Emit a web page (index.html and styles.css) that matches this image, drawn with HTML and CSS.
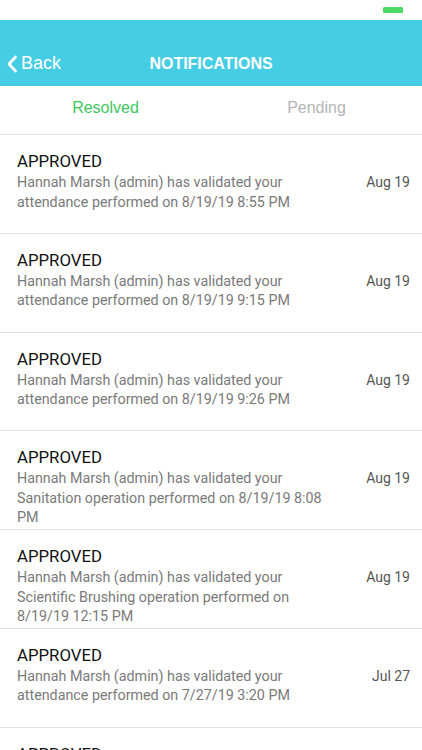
FILE: index.html
```html
<!DOCTYPE html>
<html lang="en">
<head>
    <meta charset="UTF-8">
    <meta name="viewport" content="width=device-width, initial-scale=1.0">
    <title>Notifications</title>
    <link rel="stylesheet" href="styles.css">
</head>
<body>
    <div class="status-bar">
        <span class="battery"></span>
    </div>

    <div class="header">
        <a class="back" href="#">
            <svg width="12" height="18" viewBox="0 0 12 18"><path d="M9.5 2 L3 9 L9.5 16" fill="none" stroke="#fff" stroke-width="2.8" stroke-linecap="round" stroke-linejoin="round"/></svg>
            <span>Back</span>
        </a>
        <h1>NOTIFICATIONS</h1>
    </div>

    <div class="tabs">
        <div class="tab active">Resolved</div>
        <div class="tab">Pending</div>
    </div>

    <ul class="list">
        <li class="item">
            <div class="item-text">
                <div class="item-title">APPROVED</div>
                <div class="item-body">Hannah Marsh (admin) has validated your attendance performed on 8/19/19 8:55 PM</div>
            </div>
            <div class="item-date">Aug 19</div>
        </li>
        <li class="item">
            <div class="item-text">
                <div class="item-title">APPROVED</div>
                <div class="item-body">Hannah Marsh (admin) has validated your attendance performed on 8/19/19 9:15 PM</div>
            </div>
            <div class="item-date">Aug 19</div>
        </li>
        <li class="item">
            <div class="item-text">
                <div class="item-title">APPROVED</div>
                <div class="item-body">Hannah Marsh (admin) has validated your attendance performed on 8/19/19 9:26 PM</div>
            </div>
            <div class="item-date">Aug 19</div>
        </li>
        <li class="item">
            <div class="item-text">
                <div class="item-title">APPROVED</div>
                <div class="item-body">Hannah Marsh (admin) has validated your Sanitation operation performed on 8/19/19 8:08 PM</div>
            </div>
            <div class="item-date">Aug 19</div>
        </li>
        <li class="item">
            <div class="item-text">
                <div class="item-title">APPROVED</div>
                <div class="item-body">Hannah Marsh (admin) has validated your Scientific Brushing operation performed on 8/19/19 12:15 PM</div>
            </div>
            <div class="item-date">Aug 19</div>
        </li>
        <li class="item">
            <div class="item-text">
                <div class="item-title">APPROVED</div>
                <div class="item-body">Hannah Marsh (admin) has validated your attendance performed on 7/27/19 3:20 PM</div>
            </div>
            <div class="item-date">Jul 27</div>
        </li>
        <li class="item">
            <div class="item-text">
                <div class="item-title">APPROVED</div>
                <div class="item-body">Hannah Marsh (admin) has validated your attendance performed on 7/27/19 3:10 PM</div>
            </div>
            <div class="item-date">Jul 27</div>
        </li>
    </ul>
</body>
</html>
```

FILE: styles.css
```css
body {
    margin: 0;
    padding: 0;
    background-color: #fff;
    font-family: Roboto, "Liberation Sans", sans-serif;
    height: 750px;
    overflow: hidden;
}

.status-bar {
    height: 20px;
    display: flex;
    justify-content: flex-end;
    align-items: center;
    padding-right: 19px;
}

.battery {
    width: 20px;
    height: 6px;
    border-radius: 1.5px;
    background-color: #4cd964;
}

.header {
    height: 66px;
    background-color: #45cde4;
    display: flex;
    align-items: center;
    justify-content: center;
    position: relative;
}

.back {
    position: absolute;
    left: 6px;
    top: 33px;
    display: flex;
    align-items: center;
    gap: 3px;
    color: #fff;
    text-decoration: none;
    font-family: "Liberation Sans", Arial, sans-serif;
    font-size: 18px;
}

.back svg {
    margin-top: 1px;
}

.header h1 {
    margin: 22px 0 0;
    color: #fff;
    font-family: "Liberation Sans", Arial, sans-serif;
    font-size: 16px;
    font-weight: bold;
}

.tabs {
    height: 44px;
    padding-bottom: 4px;
    display: flex;
    border-bottom: 1px solid #e3e3e3;
}

.tab {
    flex: 1;
    display: flex;
    align-items: center;
    justify-content: center;
    font-family: "Liberation Sans", Arial, sans-serif;
    font-size: 16px;
    color: #b4b4b4;
}

.tab.active {
    color: #3ec75d;
}

.list {
    list-style: none;
    margin: 0;
    padding: 0;
}

.item {
    height: 97.8px;
    border-bottom: 1px solid #e3e3e3;
    display: flex;
    align-items: flex-start;
    padding: 0 12px 0 17px;
    overflow: hidden;
}

.item-text {
    width: 314px;
    padding-top: 16px;
}

.item-title {
    font-size: 16.8px;
    line-height: 20px;
    color: #111;
}

.item-body {
    margin-top: 2px;
    font-size: 14.3px;
    line-height: 19.5px;
    color: #7a7a7a;
}

.item-date {
    margin-left: auto;
    padding-top: 39px;
    font-size: 14px;
    color: #555;
}
```
